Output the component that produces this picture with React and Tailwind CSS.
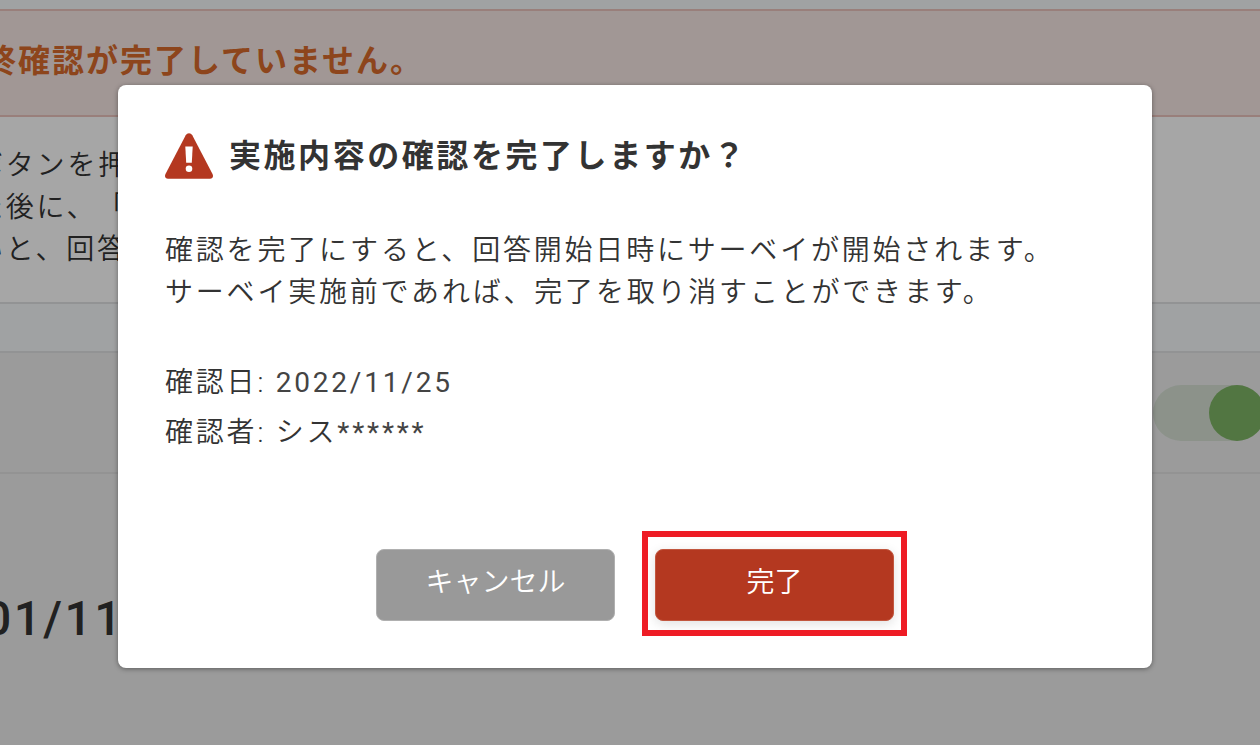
function SurveyPage() {
  return (
    <div className="min-h-screen overflow-hidden bg-[#efefef] text-[28px] leading-[42px] font-[350] tracking-widest text-[#333333]">
      <div className="h-[9px] bg-[#f6f9fb]" />
      <section className="flex h-[108px] items-center border-y-2 border-[#ecc4be] bg-[#f7e9e5]">
        <h2 className="-ml-4 pb-1 text-[32px] leading-[48px] font-bold tracking-[2px] whitespace-nowrap text-[#d96a2c]">
          終確認が完了していません。
        </h2>
      </section>
      <section className="h-[185px] bg-white pt-7">
        <p className="-ml-[25px] whitespace-nowrap">
          ボタンを押
          <br />
          た後に、「
          <br />
          いと、回答
        </p>
      </section>
      <div className="h-[51px] border-y-2 border-[#e0e2e3] bg-[#f6f9fb]" />
      <section className="flex h-[121px] items-center justify-end border-b-2 border-[#e2e2e2]">
        <label className="-mr-[5px] flex h-14 w-28 justify-end rounded-full bg-[#d7e1d5]">
          <input type="checkbox" defaultChecked aria-label="サーベイ設定" className="size-14 appearance-none rounded-full bg-[#7fb566]" />
        </label>
      </section>
      <p className="-ml-4 pt-[113px] font-[Roboto] text-[48px] leading-[64px] font-medium tracking-wider whitespace-nowrap">01/11</p>
    </div>
  );
}

function WarningIcon() {
  return (
    <svg viewBox="0 0 48 46" className="h-[46px] w-12 shrink-0" aria-hidden="true">
      <path
        fill="#b43820"
        d="M20.7 2.2C22.2-.5 25.8-.5 27.3 2.2L47.5 41c1.2 2.4.1 4.700-2.500 4.700H3C.4 45.700-.7 43.400.5 41z"
      />
      <path fill="#fff" d="M20.300 13.500h7.400l-.9 16.200h-5.600z" />
      <circle cx="24" cy="35.700" r="3.300" fill="#fff" />
    </svg>
  );
}

function ConfirmDialog() {
  return (
    <div
      role="dialog"
      aria-modal="true"
      aria-labelledby="confirm-title"
      className="w-full rounded-lg bg-white p-[47px] text-[28px] leading-[42px] font-[350] tracking-widest text-[#333333] shadow-[0_1px_5px_rgba(0,0,0,0.4)]"
    >
      <div className="flex items-center gap-4">
        <WarningIcon />
        <h1 id="confirm-title" className="text-[32px] leading-[48px] font-bold tracking-[0.08em]">
          実施内容の確認を完了しますか？
        </h1>
      </div>
      <p className="mt-[50px]">
        確認を完了にすると、回答開始日時にサーベイが開始されます。
        <br />
        サーベイ実施前であれば、完了を取り消すことができます。
      </p>
      <div className="mt-11 leading-[50px]">
        <p>
          確認日: <span className="font-normal text-[#444444]">2022/11/25</span>
        </p>
        <p>
          確認者: シス<span className="font-normal text-[#444444]">******</span>
        </p>
      </div>
      <div className="mt-[91px] flex justify-center gap-10">
        <button type="button" className="h-[72px] w-[239px] rounded-lg border border-[#b0b0b0] bg-[#999999] pb-1 font-[350] tracking-normal text-white">
          キャンセル
        </button>
        <div className="relative">
          <button type="button" className="h-[72px] w-[239px] rounded-lg border border-[#c2573f] bg-[#b43820] pb-1 font-[350] tracking-normal text-white shadow-[0_3px_12px_rgba(0,0,0,0.12)]">
            完了
          </button>
          <span className="pointer-events-none absolute -inset-x-[13px] -top-[18px] -bottom-[15px] border-6 border-[#ee1c25]" />
        </div>
      </div>
    </div>
  );
}

export default function App() {
  return (
    <div className="relative font-[Roboto,'Noto_Sans_CJK_JP',sans-serif] [text-spacing-trim:space-all]">
      <SurveyPage />
      <div className="absolute inset-0 flex items-start bg-black/35 pt-[85px] pr-[108px] pl-[118px]">
        <ConfirmDialog />
      </div>
    </div>
  );
}
